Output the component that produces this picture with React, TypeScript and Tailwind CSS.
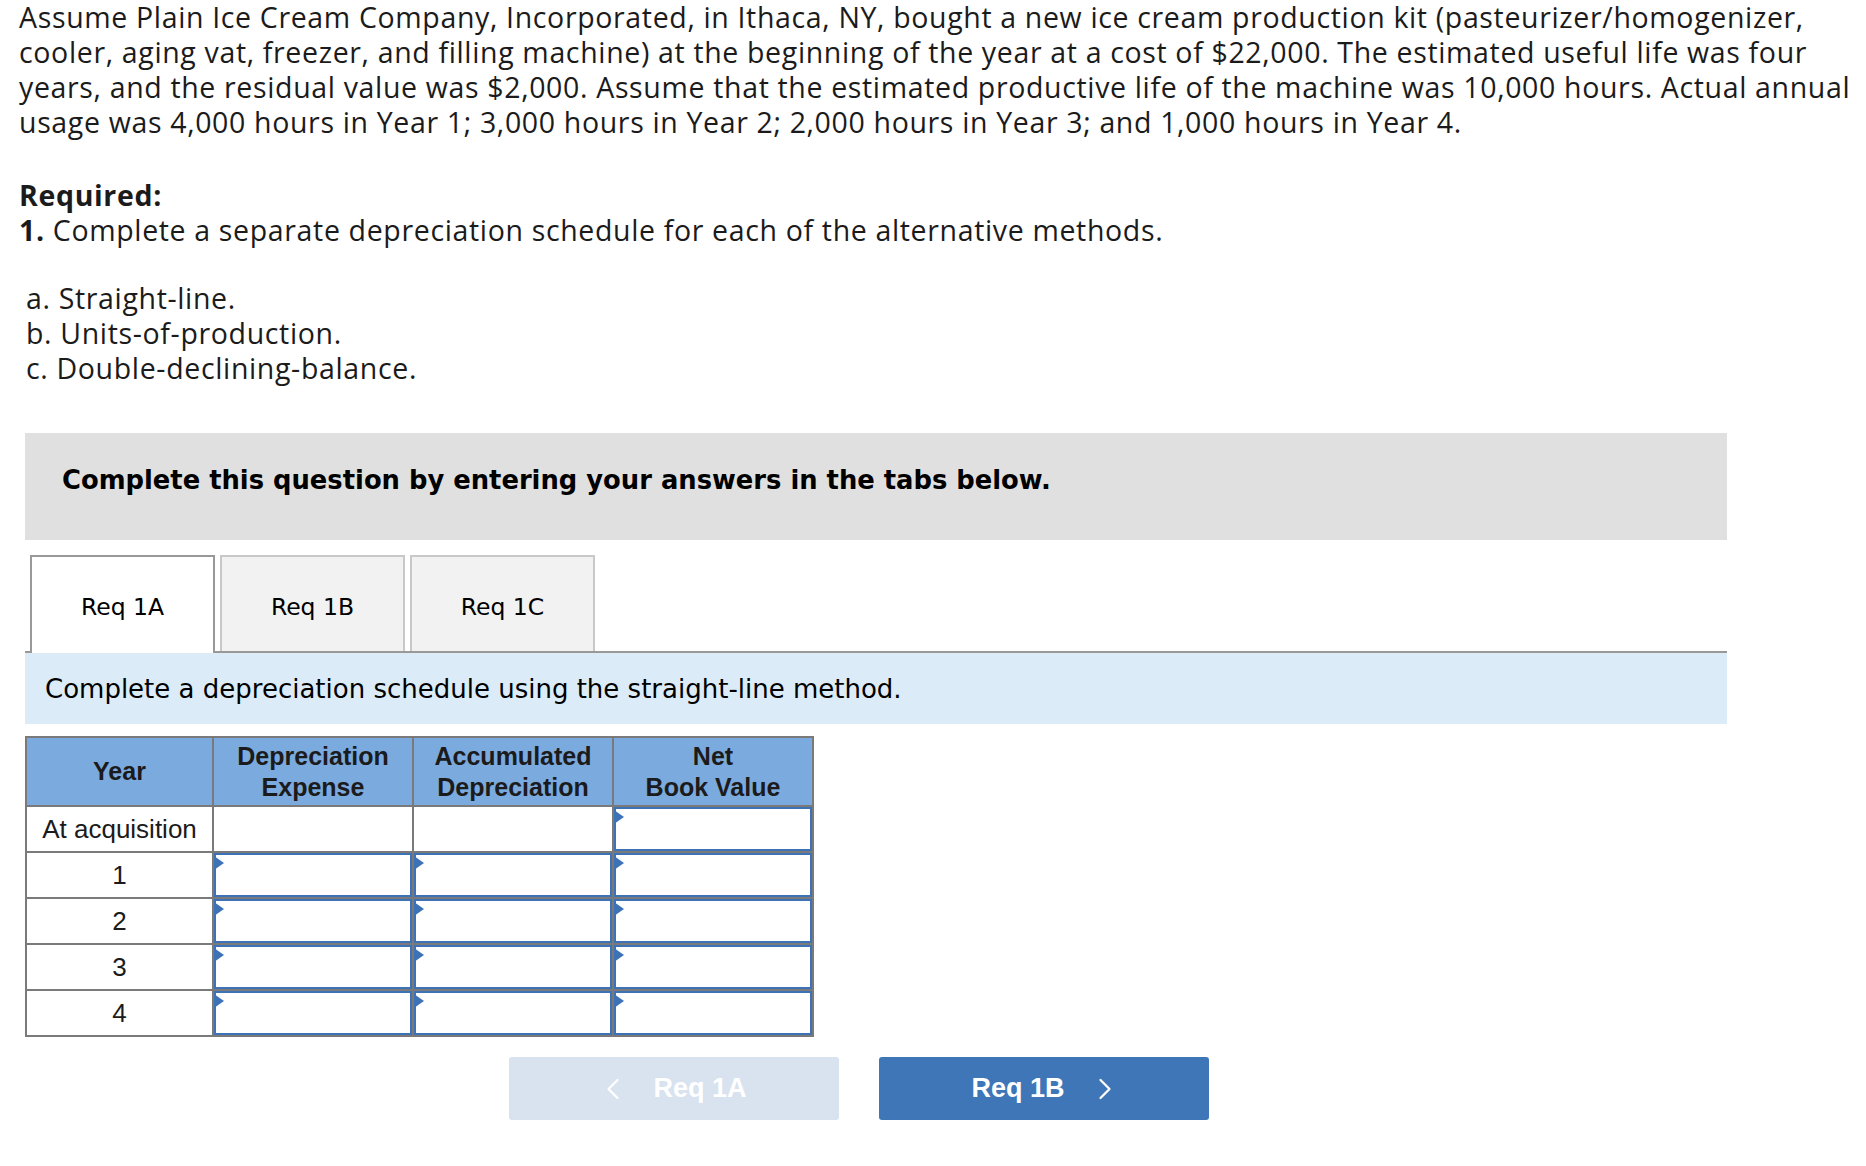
import { ChevronLeft, ChevronRight } from 'lucide-react';

const paraFont = { fontFamily: '"Open Sans", Lato, sans-serif' };

const rows = ['At acquisition', '1', '2', '3', '4'];

function InputCell({ show = true }: { show?: boolean }) {
  if (!show) return <td className="h-[46px] border-2 border-[#7a7a7a] bg-white" />;
  return (
    <td className="h-[46px] border-2 border-[#7a7a7a] bg-white p-0">
      <div className="relative h-full w-full border-2 border-[#3d73b6] bg-white">
        <span className="absolute -left-[2px] top-[1px] h-0 w-0 border-y-[7px] border-l-[10px] border-y-transparent border-l-[#3d73b6]" />
      </div>
    </td>
  );
}

export default function App() {
  return (
    <div className="min-h-screen bg-white text-[#1b1b1b]">
      {/* Problem statement */}
      <div className="pl-[19px] text-[28.5px] leading-[35px] tracking-[0.65px] whitespace-nowrap" style={paraFont}>
        <p>
          Assume Plain Ice Cream Company, Incorporated, in Ithaca, NY, bought a new ice cream production kit (pasteurizer/homogenizer,
          <br />
          cooler, aging vat, freezer, and filling machine) at the beginning of the year at a cost of $22,000. The estimated useful life was four
          <br />
          years, and the residual value was $2,000. Assume that the estimated productive life of the machine was 10,000 hours. Actual annual
          <br />
          usage was 4,000 hours in Year 1; 3,000 hours in Year 2; 2,000 hours in Year 3; and 1,000 hours in Year 4.
        </p>

        <p className="mt-[38px] font-bold">Required:</p>
        <p>
          <span className="font-bold">1.</span> Complete a separate depreciation schedule for each of the alternative methods.
        </p>

        <div className="mt-[33px] pl-[7px]">
          <p>a. Straight-line.</p>
          <p>b. Units-of-production.</p>
          <p>c. Double-declining-balance.</p>
        </div>
      </div>

      <div className="ml-[25px] w-[1702px]">
        {/* Instructions */}
        <div className="mt-[47px] h-[107px] bg-[#e0e0e0] pl-[37px] pt-[31px]">
          <p className="text-[25.8px] leading-[32px] font-bold text-black" style={{ fontFamily: '"DejaVu Sans", sans-serif' }}>
            Complete this question by entering your answers in the tabs below.
          </p>
        </div>

        {/* Tabs */}
        <div
          className="mt-[15px] flex items-end gap-[5px] border-b-2 border-[#999] pl-[5px] text-[23.5px] text-black"
          style={{ fontFamily: '"DejaVu Sans", sans-serif' }}
        >
          <div className="-mb-[2px] flex h-[98px] w-[185px] items-center justify-center border-2 border-b-0 border-[#999] bg-white pt-[5px]">
            Req 1A
          </div>
          <div className="flex h-[96px] w-[185px] items-center justify-center border-2 border-b-0 border-[#c8c8c8] bg-[#f2f2f2] pt-[7px]">
            Req 1B
          </div>
          <div className="flex h-[96px] w-[185px] items-center justify-center border-2 border-b-0 border-[#c8c8c8] bg-[#f2f2f2] pt-[7px]">
            Req 1C
          </div>
        </div>

        <div
          className="flex h-[71px] items-center bg-[#dbebf8] pl-[20px] pt-[2px] text-[26px] text-black"
          style={{ fontFamily: '"DejaVu Sans", sans-serif' }}
        >
          Complete a depreciation schedule using the straight-line method.
        </div>

        {/* Schedule table */}
        <table
          className="mt-[12px] border-collapse border-2 border-[#7a7a7a] text-[26px] text-[#1b1b1b]"
          style={{ fontFamily: '"Liberation Sans", Arial, sans-serif' }}
        >
          <thead>
            <tr className="h-[69px] bg-[#7baade] text-center text-[25px] font-bold leading-[31px]">
              <th className="w-[187px] border-2 border-[#7a7a7a]">Year</th>
              <th className="w-[200px] border-2 border-[#7a7a7a]">
                Depreciation
                <br />
                Expense
              </th>
              <th className="w-[200px] border-2 border-[#7a7a7a]">
                Accumulated
                <br />
                Depreciation
              </th>
              <th className="w-[200px] border-2 border-[#7a7a7a]">
                Net
                <br />
                Book Value
              </th>
            </tr>
          </thead>
          <tbody>
            {rows.map((r, i) => (
              <tr key={r}>
                <td className="h-[46px] border-2 border-[#7a7a7a] text-center">{r}</td>
                <InputCell show={i > 0} />
                <InputCell show={i > 0} />
                <InputCell />
              </tr>
            ))}
          </tbody>
        </table>

        {/* Nav buttons */}
        <div
          className="mt-[20px] flex justify-center gap-[40px] pr-[34px] text-[27px] font-bold text-white"
          style={{ fontFamily: '"Liberation Sans", Arial, sans-serif' }}
        >
          <button className="flex h-[63px] w-[330px] items-center justify-center gap-[22px] rounded-[3px] bg-[#d8e3ef] pr-[6px]">
            <ChevronLeft size={36} strokeWidth={1.5} />
            <span>Req 1A</span>
          </button>
          <button className="flex h-[63px] w-[330px] items-center justify-center gap-[22px] rounded-[3px] bg-[#3e76b8] pl-[6px]">
            <span>Req 1B</span>
            <ChevronRight size={36} strokeWidth={1.5} />
          </button>
        </div>
      </div>
    </div>
  );
}
